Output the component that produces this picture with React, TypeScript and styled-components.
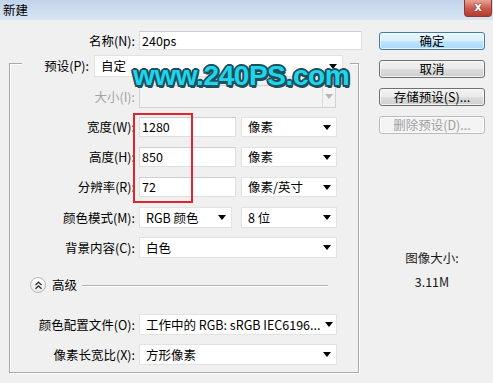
import React from 'react';
import styled, { createGlobalStyle } from 'styled-components';

const GlobalStyle = createGlobalStyle`
  html, body {
    margin: 0;
    padding: 0;
    background: #f0f0f0;
  }
  body {
    font-family: "Noto Sans CJK SC", "Liberation Sans", sans-serif;
    font-size: 12.5px;
    color: #000;
  }
`;

const Window = styled.div`
  position: relative;
  width: 493px;
  height: 383px;
  overflow: hidden;
  background: #f0f0f0;
`;

const TitleBar = styled.div`
  height: 20px;
  display: flex;
  justify-content: space-between;
  align-items: flex-start;
  background: linear-gradient(#c2d4ea, #d8e5f3);
`;

const Title = styled.span`
  padding: 2px 0 0 3px;
  line-height: 16px;
`;

const CloseButton = styled.div`
  width: 28px;
  height: 17px;
  margin-right: 1px;
  box-sizing: border-box;
  border: 1px solid #8d3a33;
  border-top: none;
  border-radius: 0 0 4px 4px;
  background: linear-gradient(#e8a494, #c9574a 55%, #b53a2e);
  color: #fff;
  font-family: "DejaVu Sans", sans-serif;
  font-weight: bold;
  font-size: 12px;
  line-height: 15px;
  text-align: center;
  text-shadow: 0 0 1px #5a1a14, 0 0 1px #5a1a14;
`;

const Body = styled.div`
  display: flex;
`;

const LeftColumn = styled.div`
  width: 362px;
`;

const RightColumn = styled.div`
  width: 106px;
  margin-left: 17px;
  padding-top: 12px;
  display: flex;
  flex-direction: column;
  gap: 10px;
`;

const Row = styled.div<{ $top: number; $h: number }>`
  display: flex;
  align-items: center;
  gap: 4px;
  margin-top: ${p => p.$top}px;
  height: ${p => p.$h}px;
`;

const Label = styled.span<{ $w: number; $disabled?: boolean }>`
  flex-shrink: 0;
  width: ${p => p.$w}px;
  text-align: right;
  white-space: nowrap;
  line-height: 16px;
  color: ${p => (p.$disabled ? '#a3a3a3' : '#000')};
`;

const Pair = styled.div<{ $gap: number }>`
  display: flex;
  gap: ${p => p.$gap}px;
  height: 100%;
`;

const TextField = styled.div<{ $w: number }>`
  width: ${p => p.$w}px;
  height: 100%;
  box-sizing: border-box;
  background: #fff;
  border: 1px solid #dedede;
  border-top-color: #cfcfcf;
  display: flex;
  align-items: center;
  padding-left: 2px;
  line-height: 16px;
  white-space: nowrap;
`;

const Select = styled.div<{ $w: number; $disabled?: boolean }>`
  width: ${p => p.$w}px;
  height: 100%;
  box-sizing: border-box;
  background: ${p => (p.$disabled ? '#f3f3f3' : '#fff')};
  border: 1px solid ${p => (p.$disabled ? '#d3d3d3' : '#e2e2e2')};
  display: flex;
  align-items: center;
  justify-content: space-between;
  padding-left: 6px;
  line-height: 16px;
  white-space: nowrap;
  overflow: hidden;
`;

const ArrowBox = styled.span<{ $disabled?: boolean }>`
  flex-shrink: 0;
  width: ${p => (p.$disabled ? 12 : 18)}px;
  height: 100%;
  display: flex;
  align-items: center;
  justify-content: center;
  border-left: ${p => (p.$disabled ? '1px solid #dadada' : 'none')};
`;

const Arrow = styled.span<{ $disabled?: boolean }>`
  width: 0;
  height: 0;
  border-left: 4px solid transparent;
  border-right: 4px solid transparent;
  border-top: 5px solid ${p => (p.$disabled ? '#b5b5b5' : '#000')};
`;

const GroupBox = styled.div`
  margin: 13px 0 0 9px;
  width: 350px;
  height: 310px;
  box-sizing: border-box;
  border: 1px solid #a9a9a9;
  box-shadow: 1px 1px 0 #fff, inset 1px 1px 0 #fff;
`;

const GroupHeader = styled.div`
  display: flex;
  align-items: center;
  gap: 5px;
  width: fit-content;
  height: 22px;
  margin: -9px 0 0 12px;
  padding-right: 7px;
  background: #f0f0f0;
`;

const Advanced = styled.div`
  display: flex;
  align-items: center;
  height: 18px;
  margin: 18px 30px 0 20px;
`;

const Toggle = styled.span`
  flex-shrink: 0;
  width: 16px;
  height: 16px;
  box-sizing: border-box;
  border-radius: 50%;
  border: 1px solid #b9b9b9;
  background: linear-gradient(#ffffff, #e8e8e8);
  display: flex;
  align-items: center;
  justify-content: center;
`;

const AdvancedLabel = styled.span`
  margin: 0 5px 0 6px;
  line-height: 16px;
`;

const Rule = styled.span`
  flex: 1;
  height: 1px;
  background: #b4b4b4;
  box-shadow: 0 1px 0 #fff;
`;

const Button = styled.div<{ $default?: boolean; $disabled?: boolean }>`
  height: 18px;
  box-sizing: border-box;
  border-radius: 3px;
  border: 1px solid ${p => (p.$default ? '#3d7bad' : p.$disabled ? '#b8bcbf' : '#707070')};
  background: ${p =>
    p.$default
      ? 'linear-gradient(#eaf6fd 0%, #d9f0fc 50%, #bee6fd 51%, #a7d9f5 100%)'
      : p.$disabled
      ? '#f4f4f4'
      : 'linear-gradient(#f2f2f2 0%, #ebebeb 50%, #dddddd 51%, #cfcfcf 100%)'};
  box-shadow: inset 0 0 0 1px rgba(255, 255, 255, 0.7);
  color: ${p => (p.$disabled ? '#a0a0a0' : '#000')};
  text-align: center;
  line-height: 16px;
  white-space: nowrap;
`;

const SizeInfo = styled.div`
  margin-top: 106px;
  display: flex;
  flex-direction: column;
  align-items: center;
  gap: 8px;
  line-height: 16px;
  color: #1a1a1a;
`;

const Watermark = styled.div`
  position: absolute;
  left: 133px;
  top: 61px;
  font-family: "Liberation Sans", "DejaVu Sans", sans-serif;
  font-weight: bold;
  font-size: 28px;
  letter-spacing: -0.4px;
  line-height: 30px;
  color: #1ed6ea;
  text-shadow:
    2px 0 0 #1d4f5d, -2px 0 0 #1d4f5d, 0 2px 0 #1d4f5d, 0 -2px 0 #1d4f5d,
    1.5px 1.5px 0 #1d4f5d, -1.5px 1.5px 0 #1d4f5d, 1.5px -1.5px 0 #1d4f5d, -1.5px -1.5px 0 #1d4f5d,
    1px 3px 0 #1d4f5d;
  white-space: nowrap;
  pointer-events: none;
`;

const Highlight = styled.div`
  position: absolute;
  left: 133px;
  top: 113px;
  width: 60px;
  height: 90px;
  box-sizing: border-box;
  border: 2px solid #e0262c;
  pointer-events: none;
`;

type DropProps = { w: number; text?: string; disabled?: boolean };

const Drop = ({ w, text, disabled }: DropProps) => (
  <Select $w={w} $disabled={disabled}>
    <span>{text}</span>
    <ArrowBox $disabled={disabled}>
      <Arrow $disabled={disabled} />
    </ArrowBox>
  </Select>
);

const ChevronsUp = () => (
  <svg width="9" height="9" viewBox="0 0 9 9" fill="none" stroke="#333" strokeWidth="1.3">
    <polyline points="1.5,4 4.5,1.2 7.5,4" />
    <polyline points="1.5,7.8 4.5,5 7.5,7.8" />
  </svg>
);

export default function App() {
  return (
    <Window>
      <GlobalStyle />
      <TitleBar>
        <Title>新建</Title>
        <CloseButton>x</CloseButton>
      </TitleBar>
      <Body>
        <LeftColumn>
          <Row $top={11} $h={19}>
            <Label $w={135}>名称(N):</Label>
            <TextField $w={223}>240ps</TextField>
          </Row>
          <GroupBox>
            <GroupHeader>
              <Label $w={67}>预设(P):</Label>
              <Drop w={249} text="自定" />
            </GroupHeader>
            <Row $top={8} $h={23}>
              <Label $w={125} $disabled>大小(I):</Label>
              <Drop w={197} disabled />
            </Row>
            <Row $top={9} $h={20}>
              <Label $w={125}>宽度(W):</Label>
              <Pair $gap={5}>
                <TextField $w={97}>1280</TextField>
                <Drop w={96} text="像素" />
              </Pair>
            </Row>
            <Row $top={10} $h={20}>
              <Label $w={125}>高度(H):</Label>
              <Pair $gap={5}>
                <TextField $w={97}>850</TextField>
                <Drop w={96} text="像素" />
              </Pair>
            </Row>
            <Row $top={10} $h={20}>
              <Label $w={125}>分辨率(R):</Label>
              <Pair $gap={5}>
                <TextField $w={97}>72</TextField>
                <Drop w={96} text="像素/英寸" />
              </Pair>
            </Row>
            <Row $top={10} $h={21}>
              <Label $w={125}>颜色模式(M):</Label>
              <Pair $gap={9}>
                <Drop w={93} text="RGB 颜色" />
                <Drop w={96} text="8 位" />
              </Pair>
            </Row>
            <Row $top={9} $h={21}>
              <Label $w={125}>背景内容(C):</Label>
              <Drop w={198} text="白色" />
            </Row>
            <Advanced>
              <Toggle>
                <ChevronsUp />
              </Toggle>
              <AdvancedLabel>高级</AdvancedLabel>
              <Rule />
            </Advanced>
            <Row $top={20} $h={21}>
              <Label $w={125}>颜色配置文件(O):</Label>
              <Drop w={198} text="工作中的 RGB: sRGB IEC6196..." />
            </Row>
            <Row $top={9} $h={21}>
              <Label $w={125}>像素长宽比(X):</Label>
              <Drop w={198} text="方形像素" />
            </Row>
          </GroupBox>
        </LeftColumn>
        <RightColumn>
          <Button $default>确定</Button>
          <Button>取消</Button>
          <Button>存储预设(S)...</Button>
          <Button $disabled>删除预设(D)...</Button>
          <SizeInfo>
            <span>图像大小:</span>
            <span>3.11M</span>
          </SizeInfo>
        </RightColumn>
      </Body>
      <Watermark>www.240PS.com</Watermark>
      <Highlight />
    </Window>
  );
}
